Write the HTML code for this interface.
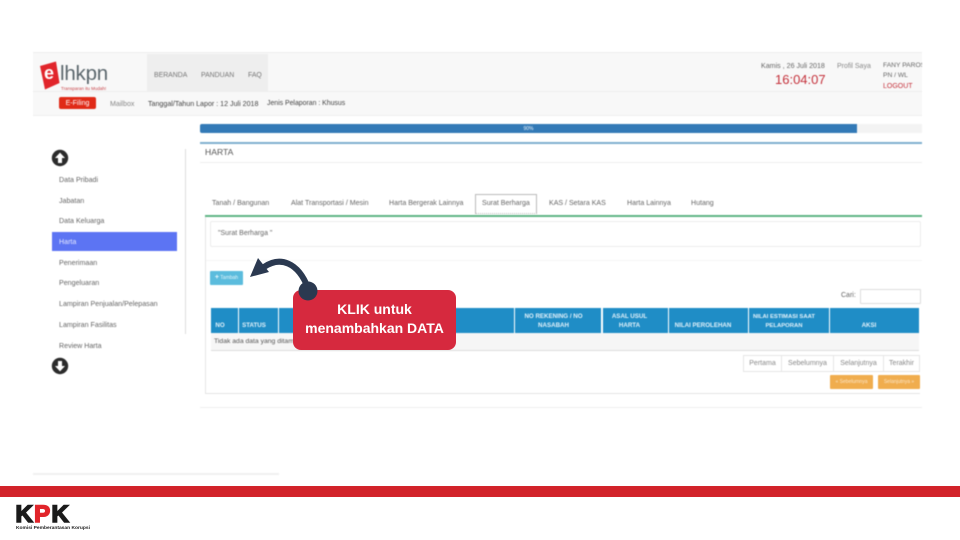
<!DOCTYPE html>
<html lang="id">
<head>
<meta charset="utf-8">
<title>e-LHKPN Harta</title>
<style>
html,body{margin:0;padding:0;background:#fff}
body{width:960px;height:540px;position:relative;overflow:hidden;font-family:"Liberation Sans",sans-serif;color:#555}
#shot{position:absolute;left:0;top:0;width:960px;height:540px;filter:blur(.45px)}
.b{position:absolute}
.t{position:absolute;white-space:nowrap;line-height:10px;height:10px;font-size:7px}
.th{position:absolute;top:308px;height:25px;background:#1f8dc6}
.h{position:absolute;color:#e4f2fa;font-weight:bold;font-size:6.2px;line-height:9px;text-align:center;white-space:nowrap}
.pg{position:absolute;top:355px;height:17px;box-sizing:border-box;border:1px solid #e6e6e6;background:#fff;font-size:7px;line-height:15px;text-align:center;color:#888}
.m{color:#666;font-size:7.1px;left:59px}
.tab{color:#666;font-size:7.05px;top:199px}
</style>
</head>
<body>
<div id="shot">
  <!-- header -->
  <div class="b" style="left:33px;top:53px;width:889px;height:62px;background:#f8f8f8"></div>
  <div class="b" style="left:33px;top:52px;width:889px;height:1px;background:#eee"></div>
  <div class="b" style="left:147px;top:54px;width:121px;height:37px;background:#eeeeee"></div>
  <div class="b" style="left:33px;top:91px;width:889px;height:1px;background:#eee"></div>
  <div class="b" style="left:33px;top:115px;width:889px;height:1px;background:#efefef"></div>

  <svg class="b" style="left:38px;top:60px" width="24" height="30" viewBox="0 0 24 30">
    <path d="M2 6 L18 1.5 L21.5 23 L7 29.5 Z" fill="#e1252b"/>
  </svg>
  <div class="t" style="left:44px;top:64px;font-size:18px;line-height:18px;height:18px;font-weight:bold;color:#fff">e</div>
  <div class="t" style="left:60px;top:62px;font-size:20.5px;line-height:24px;height:24px;color:#5a666c;letter-spacing:-.2px">lhkpn</div>
  <div class="t" style="left:61px;top:86px;font-size:4.5px;line-height:6px;height:6px;color:#c8454a">Transparan itu Mudah!</div>

  <div class="t" style="left:154px;top:71px;color:#777;font-size:6.9px">BERANDA</div>
  <div class="t" style="left:201px;top:71px;color:#777;font-size:6.9px">PANDUAN</div>
  <div class="t" style="left:248px;top:71px;color:#777;font-size:6.9px">FAQ</div>

  <div class="b" style="left:59px;top:97px;width:37px;height:12px;background:#e02a17;border-radius:2px;color:#fff;font-size:7px;line-height:13px;text-align:center">E-Filing</div>
  <div class="t" style="left:110px;top:99px;color:#888;font-size:7.1px">Mailbox</div>
  <div class="t" style="left:148px;top:99px;color:#444;font-size:7.1px">Tanggal/Tahun Lapor : 12 Juli 2018</div>
  <div class="t" style="left:267px;top:99px;color:#444;font-size:6.9px">Jenis Pelaporan : Khusus</div>

  <div class="t" style="left:761px;top:61px;color:#666;font-size:7.1px">Kamis , 26 Juli 2018</div>
  <div class="t" style="left:775px;top:72px;height:15px;line-height:15px;color:#c4303a;font-size:13px">16:04:07</div>
  <div class="t" style="left:837px;top:62px;color:#888;font-size:7px">Profil Saya</div>
  <div class="b" style="left:883px;top:61px;width:39px;height:10px;overflow:hidden"><div class="t" style="left:0;top:0;color:#666;font-size:6.7px">FANY PAROS</div></div>
  <div class="t" style="left:883px;top:71px;color:#666;font-size:6.7px">PN / WL</div>
  <div class="t" style="left:883px;top:82px;color:#c4303a;font-size:7px">LOGOUT</div>

  <!-- progress -->
  <div class="b" style="left:200px;top:124px;width:722px;height:9px;background:#f3f3f3"></div>
  <div class="b" style="left:200px;top:124px;width:657px;height:9px;background:#337ab7;border-radius:2px 0 0 2px;color:#e8f0f7;font-size:5px;line-height:10px;text-align:center">90%</div>
  <div class="b" style="left:200px;top:142px;width:722px;height:2px;background:#7fb0cf"></div>
  <div class="t" style="left:205px;top:147px;color:#555;font-size:8.6px">HARTA</div>
  <div class="b" style="left:200px;top:162px;width:722px;height:1px;background:#eee"></div>

  <!-- sidebar -->
  <svg class="b" style="left:51px;top:149px" width="18" height="18" viewBox="0 0 18 18">
    <circle cx="9" cy="9" r="8.2" fill="#2b2b2b"/>
    <path d="M9 3.6 L14 9 H11 V14 H7 V9 H4 Z" fill="#fff"/>
  </svg>
  <svg class="b" style="left:51px;top:357px" width="18" height="18" viewBox="0 0 18 18">
    <circle cx="9" cy="9" r="8.2" fill="#2b2b2b"/>
    <path d="M9 14.4 L14 9 H11 V4 H7 V9 H4 Z" fill="#fff"/>
  </svg>
  <div class="b" style="left:185px;top:149px;width:1px;height:185px;background:#ddd"></div>
  <div class="b" style="left:52px;top:232px;width:125px;height:19px;background:#5c74f3"></div>
  <div class="t m" style="top:175px">Data Pribadi</div>
  <div class="t m" style="top:196px">Jabatan</div>
  <div class="t m" style="top:216px">Data Keluarga</div>
  <div class="t m" style="top:237px;color:#e6e9ff">Harta</div>
  <div class="t m" style="top:258px">Penerimaan</div>
  <div class="t m" style="top:278px">Pengeluaran</div>
  <div class="t m" style="top:299px">Lampiran Penjualan/Pelepasan</div>
  <div class="t m" style="top:320px">Lampiran Fasilitas</div>
  <div class="t m" style="top:341px">Review Harta</div>

  <!-- tabs -->
  <div class="t tab" style="left:212px">Tanah / Bangunan</div>
  <div class="t tab" style="left:291px">Alat Transportasi / Mesin</div>
  <div class="t tab" style="left:389px">Harta Bergerak Lainnya</div>
  <div class="b" style="left:475px;top:194px;width:60px;height:18px;border:1px solid #bbb;border-bottom:1px dotted #bbb;background:#fff"></div>
  <div class="t tab" style="left:482px">Surat Berharga</div>
  <div class="t tab" style="left:549px">KAS / Setara KAS</div>
  <div class="t tab" style="left:627px">Harta Lainnya</div>
  <div class="t tab" style="left:691px">Hutang</div>
  <div class="b" style="left:205px;top:215px;width:717px;height:2px;background:#5fb585"></div>
  <div class="b" style="left:205px;top:217px;width:1px;height:177px;background:#e6e6e6"></div>

  <div class="b" style="left:210px;top:221px;width:709px;height:24px;border:1px solid #ececec;border-radius:2px;background:#fff"></div>
  <div class="t" style="left:218px;top:229px;color:#666;font-size:7px">"Surat Berharga "</div>
  <div class="b" style="left:206px;top:260px;width:716px;height:1px;background:#f5f5f5"></div>

  <div class="b" style="left:210px;top:271px;width:33px;height:14px;background:#5bbcdd;border-radius:1px;color:#e6f6fb;font-size:5px;line-height:14px;text-align:center"><b style="font-size:7px">+</b> Tambah</div>

  <div class="t" style="left:841px;top:291px;color:#666;font-size:7px">Cari:</div>
  <div class="b" style="left:860px;top:289px;width:59px;height:13px;border:1px solid #ddd;background:#fff;border-radius:1px"></div>

  <!-- table -->
  <div class="th" style="left:211px;width:27px"></div>
  <div class="th" style="left:239px;width:39px"></div>
  <div class="th" style="left:279px;width:235px"></div>
  <div class="th" style="left:515px;width:86px"></div>
  <div class="th" style="left:603px;width:65px"></div>
  <div class="th" style="left:669px;width:79px"></div>
  <div class="th" style="left:749px;width:80px"></div>
  <div class="th" style="left:830px;width:89px"></div>
  <div class="h" style="left:211px;top:321px;width:18px">NO</div>
  <div class="h" style="left:239px;top:321px;width:30px">STATUS</div>
  <div class="h" style="left:515px;top:312px;width:77px">NO REKENING / NO<br>NASABAH</div>
  <div class="h" style="left:603px;top:312px;width:53px">ASAL USUL<br>HARTA</div>
  <div class="h" style="left:669px;top:321px;width:68px">NILAI PEROLEHAN</div>
  <div class="h" style="left:749px;top:313px;width:70px;font-size:5.9px">NILAI ESTIMASI SAAT<br>PELAPORAN</div>
  <div class="h" style="left:830px;top:321px;width:78px">AKSI</div>
  <div class="b" style="left:211px;top:333px;width:708px;height:17px;background:#f6f6f6;border-bottom:1px solid #ddd"></div>
  <div class="t" style="left:214px;top:337px;color:#555;font-size:6.8px">Tidak ada data yang ditampilkan</div>

  <!-- pagination -->
  <div class="pg" style="left:743px;width:39px">Pertama</div>
  <div class="pg" style="left:781px;width:53px">Sebelumnya</div>
  <div class="pg" style="left:833px;width:51px">Selanjutnya</div>
  <div class="pg" style="left:883px;width:37px">Terakhir</div>
  <div class="b" style="left:830px;top:375px;width:43px;height:14px;background:#f0ad4e;border-radius:1px;color:#fbe6c8;font-size:5px;line-height:14px;text-align:center">« Sebelumnya</div>
  <div class="b" style="left:878px;top:375px;width:42px;height:14px;background:#f0ad4e;border-radius:1px;color:#fbe6c8;font-size:5px;line-height:14px;text-align:center">Selanjutnya »</div>
  <div class="b" style="left:205px;top:393px;width:715px;height:1px;background:#e4e4e4"></div>
  <div class="b" style="left:200px;top:407px;width:722px;height:1px;background:#eeeeee"></div>

  <!-- bottom -->
  <div class="b" style="left:33px;top:473px;width:246px;height:2px;background:#f0f0f0"></div>
</div>

<!-- slide overlays -->
<div class="b" style="left:0;top:486px;width:960px;height:11px;background:#d2232a"></div>
<div class="t" style="left:15.5px;top:503px;height:24px;line-height:24px;font-size:24px;font-weight:bold;color:#1a1a1a;letter-spacing:1.3px;-webkit-text-stroke:1.6px #1a1a1a">K<span style="color:#e1252b;-webkit-text-stroke-color:#e1252b">P</span>K</div>
<div class="t" style="left:16px;top:524px;color:#222;font-size:4.9px;font-weight:bold">Komisi Pemberantasan Korupsi</div>

<div class="b" style="left:293px;top:290px;width:163px;height:60px;background:#d6293e;border-radius:8px"></div>
<svg class="b" style="left:245px;top:250px" width="80" height="60" viewBox="245 250 80 60">
  <path d="M264 267 C280 256 298 262 308 288" fill="none" stroke="#2b3950" stroke-width="6"/>
  <path d="M250 277 L258 258 L269 272 Z" fill="#2b3950"/>
  <circle cx="308" cy="291" r="9.5" fill="#2b3950"/>
</svg>
<div class="b" style="left:293px;top:300px;width:163px;color:#fff;font-family:'Liberation Sans',sans-serif;font-weight:bold;font-size:14px;line-height:19px;text-align:center">KLIK untuk<br>menambahkan DATA</div>
</body>
</html>
